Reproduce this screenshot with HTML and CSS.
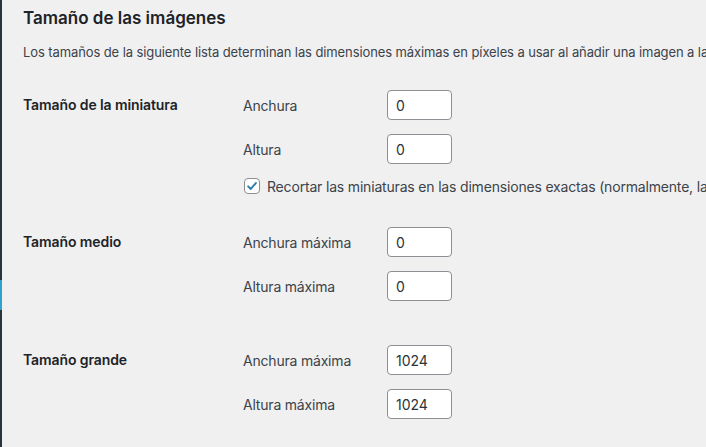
FILE: index.html
```html
<!DOCTYPE html>
<html lang="es">
<head>
<meta charset="utf-8">
<title>Ajustes de medios</title>
<link rel="stylesheet" href="styles.css">
</head>
<body>
<div class="page">
  <div class="sidebar-edge"><span class="edge-hl"></span></div>
  <main class="content">
    <h2 class="title">Tamaño de las imágenes</h2>
    <p class="desc">Los tamaños de la siguiente lista determinan las dimensiones máximas en píxeles a usar al añadir una imagen a la biblioteca de medios.</p>

    <section class="row row-thumb">
      <div class="row-label">Tamaño de la miniatura</div>
      <div class="row-fields">
        <div class="field"><label class="field-label" for="tw">Anchura</label><input class="num" id="tw" type="text" value="0"></div>
        <div class="field"><label class="field-label" for="th">Altura</label><input class="num" id="th" type="text" value="0"></div>
        <div class="check">
          <span class="cb"><svg viewBox="0 0 16 16" width="16" height="16"><path d="M3.6 8.4 L6.6 11.4 L12.4 4.6" fill="none" stroke="#2a7cab" stroke-width="2.2" stroke-linecap="round" stroke-linejoin="round"/></svg></span>
          <label class="check-label">Recortar las miniaturas en las dimensiones exactas (normalmente, las miniaturas son proporcionales)</label>
        </div>
      </div>
    </section>

    <section class="row row-medium">
      <div class="row-label">Tamaño medio</div>
      <div class="row-fields">
        <div class="field"><label class="field-label" for="mw">Anchura máxima</label><input class="num" id="mw" type="text" value="0"></div>
        <div class="field"><label class="field-label" for="mh">Altura máxima</label><input class="num" id="mh" type="text" value="0"></div>
      </div>
    </section>

    <section class="row row-large">
      <div class="row-label">Tamaño grande</div>
      <div class="row-fields">
        <div class="field"><label class="field-label" for="lw">Anchura máxima</label><input class="num" id="lw" type="text" value="1024"></div>
        <div class="field"><label class="field-label" for="lh">Altura máxima</label><input class="num" id="lh" type="text" value="1024"></div>
      </div>
    </section>
  </main>
</div>
</body>
</html>
```

FILE: styles.css
```css
* { box-sizing: border-box; }

html, body {
  margin: 0;
  padding: 0;
  width: 706px;
  height: 447px;
  overflow: hidden;
  background: #f0f0f1;
}

body {
  font-family: Inter, "Noto Sans", "Liberation Sans", sans-serif;
  color: #3c434a;
  font-size: 14px;
}

.page {
  display: flex;
  height: 447px;
}

.sidebar-edge {
  flex: 0 0 2px;
  background: #2c3338;
  display: flex;
  flex-direction: column;
  padding-top: 280px;
}

.edge-hl {
  display: block;
  height: 30px;
  background: #2ea2cc;
}

.content {
  flex: 1;
  padding-left: 21px;
  white-space: nowrap;
  overflow: hidden;
}

.title {
  margin: 7px 0 0;
  font-size: 17px;
  line-height: 23px;
  font-weight: 600;
  color: #1d2327;
}

.desc {
  margin: 12px 0 0;
  font-size: 13px;
  line-height: 20px;
  letter-spacing: -0.1px;
  color: #3c434a;
}

.row {
  display: grid;
  grid-template-columns: 220px 1fr;
}

.row-thumb { margin-top: 28px; }
.row-medium { margin-top: 31px; }
.row-large { margin-top: 44px; }

.row-label {
  font-size: 14px;
  font-weight: 600;
  line-height: 30px;
  letter-spacing: -0.1px;
  color: #1d2327;
}

.row-fields {
  display: flex;
  flex-direction: column;
  gap: 14px;
}

.field {
  display: flex;
  align-items: center;
  height: 30px;
}

.field-label {
  width: 144px;
  font-size: 14px;
  letter-spacing: -0.2px;
  color: #3c434a;
}

.num {
  width: 65px;
  height: 30px;
  margin: 0;
  padding: 0 8px;
  border: 1px solid #8c8f94;
  border-radius: 4px;
  background: #fff;
  font-family: inherit;
  font-size: 14px;
  color: #2c3338;
  box-shadow: none;
  outline: none;
}

.check {
  display: flex;
  align-items: center;
  height: 20px;
  margin-top: -2px;
}

.cb {
  display: flex;
  align-items: center;
  justify-content: center;
  width: 16px;
  height: 16px;
  margin-left: 1px;
  border: 1px solid #8c8f94;
  border-radius: 4px;
  background: #fff;
}

.cb svg { display: block; }

.check-label {
  margin-left: 7px;
  font-size: 14px;
  letter-spacing: -0.18px;
  color: #3c434a;
}
```
